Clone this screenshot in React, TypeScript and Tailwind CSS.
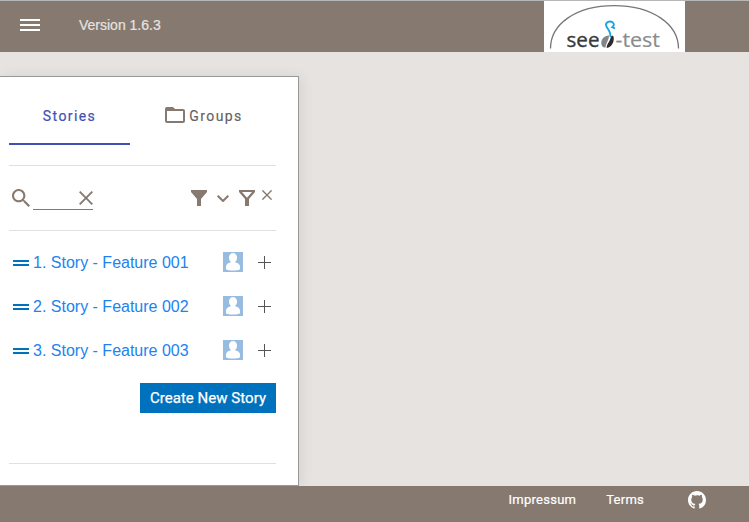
const stories = ['1. Story - Feature 001', '2. Story - Feature 002', '3. Story - Feature 003'];

function Logo() {
  return (
    <svg className="block h-[51px] w-[141px] bg-white" viewBox="0 0 141 51">
      <path d="M6.5 47.5C6.5 23 32 4.6 70 4.6S134.5 23 134.5 47.5" fill="none" stroke="#77777a" strokeWidth="1.3" />
      <text x="22.5" y="46" textLength="33" lengthAdjust="spacingAndGlyphs" fontSize="20" fill="#39393b" stroke="#39393b" strokeWidth="0.35" fontFamily="Open Sans, sans-serif">see</text>
      <text x="71.5" y="46" textLength="44.5" lengthAdjust="spacingAndGlyphs" fontSize="20" fill="#8b8b8d" stroke="#8b8b8d" strokeWidth="0.2" fontFamily="Open Sans, sans-serif">-test</text>
      <path d="M65 34.5C60 34.5 57 38.5 57.3 42.5C57.5 45.5 59.5 47 61.5 46.5C62 42 65 39 65 34.5z" fill="#858587" />
      <path d="M69.3 35C71 39.5 68 46.5 62.7 47C62.5 42.5 66.5 40.5 66.8 35.5C67.5 34.8 68.5 34.5 69.3 35z" fill="#2b2b2d" />
      <path d="M66.3 36C67.3 30 62.5 27.5 62 24.2C61.6 20.8 66 19.6 68.5 21.3C70.3 22.6 70.4 24.3 68.3 26.2L71 27.3" fill="none" stroke="#1aa7dc" strokeWidth="1.9" />
    </svg>
  );
}

function Avatar() {
  return (
    <svg className="h-5 w-5 shrink-0" viewBox="0 0 20 20">
      <rect width="20" height="20" fill="#98bce0" />
      <ellipse cx="10" cy="5.7" rx="4.1" ry="4.7" fill="#fff" />
      <path d="M7.6 9h4.8v1.4c3 .3 4.6 2 4.6 4.400v2.400C15.500 19 4.500 19 3 17.200v-2.400c0-2.400 1.600-4.100 4.600-4.400z" fill="#fff" />
    </svg>
  );
}

export default function App() {
  return (
    <div className="flex h-[522px] w-[749px] flex-col overflow-hidden bg-[#e6e3e0] font-[Roboto,sans-serif]">
      <header className="flex h-[52px] shrink-0 items-center border-t border-[#b7b7b7] bg-[#867970]">
        <svg className="mb-[3px] ml-5 h-3 w-5" viewBox="0 0 20 12" fill="#fff">
          <path d="M0 0h20v2H0zM0 5h20v2H0zM0 10h20v2H0z" />
        </svg>
        <span className="mb-[3px] ml-[39px] text-[14px] leading-5 text-[#e6e3e0] [-webkit-text-stroke:0.2px_#e6e3e0] font-['Liberation_Sans',sans-serif]">Version 1.6.3</span>
        <div className="mr-16 ml-auto"><Logo /></div>
      </header>

      <main className="flex h-[434px] shrink-0 pt-6">
        <aside className="flex h-[410px] w-[299px] flex-col border-y border-r border-[#989898] bg-white pr-[22px] pl-[9px] shadow-[3px_0_12px_rgba(0,0,0,0.07)]">
          <div className="flex h-[68px] shrink-0 text-[14px] tracking-[1.4px]">
            <div className="flex w-[121px] items-center justify-center border-b-2 border-[#3f51b5] pt-3 text-[#3f51b5] [-webkit-text-stroke:0.2px_#3f51b5]">Stories</div>
            <div className="flex flex-1 items-center justify-center pt-2.5 pl-0.5 text-[#666260] [-webkit-text-stroke:0.15px_#666260]">
              <svg className="mr-1 mb-0.5 h-4 w-5" viewBox="0 0 20 16">
                <path d="M2 0h6l2 2h8a2 2 0 0 1 2 2v10a2 2 0 0 1-2 2H2a2 2 0 0 1-2-2V2a2 2 0 0 1 2-2zm0 4v10h16V4z" fill="#867970" fillRule="evenodd" />
              </svg>
              Groups
            </div>
          </div>
          <div className="mt-5 h-px shrink-0 bg-[#e0e0e0]" />

          <div className="flex h-16 shrink-0 items-start text-[#867970]">
            <svg className="mt-[23px] ml-[3px] h-[18px] w-[18px]" viewBox="3 3 17.5 17.5" fill="currentColor">
              <path d="M15.5 14h-.79l-.28-.27A6.5 6.5 0 1 0 13.73 14.43l.27.28v.79l5 4.99L20.49 19zm-6 0a4.5 4.5 0 1 1 0-9 4.5 4.5 0 0 1 0 9z" />
            </svg>
            <div className="mt-5 ml-[3px] flex h-6 w-[60px] items-center justify-end border-b border-[#867970]">
              <svg className="h-3.5 w-3.5" viewBox="0 0 14 14" fill="none" stroke="currentColor" strokeWidth="1.9">
                <path d="M.7.7l12.6 12.6M13.3.7L.7 13.3" />
              </svg>
            </div>
            <svg className="mt-6 ml-[98px] h-4 w-4" viewBox="0 0 16 16" fill="currentColor">
              <path d="M0 0h16v2L10 9v7H6V9L0 2z" />
            </svg>
            <svg className="mt-[29px] ml-2.5 h-[7px] w-3" viewBox="0 0 12 7" fill="none" stroke="currentColor" strokeWidth="2">
              <path d="M.7.7L6 6l5.3-5.3" />
            </svg>
            <svg className="mt-6 ml-2.5 h-4 w-4" viewBox="0 0 16 16" fill="currentColor">
              <path fillRule="evenodd" d="M0 0h16v2L10 9v7H6V9L0 2zM3 2l5 5.8L13 2z" />
            </svg>
            <svg className="mt-6 ml-[7px] h-2.5 w-2.5" viewBox="0 0 10 10" fill="none" stroke="currentColor" strokeWidth="1.4">
              <path d="M.4.4l9.2 9.2M9.6.4L.4 9.6" />
            </svg>
          </div>
          <div className="h-px shrink-0 bg-[#e0e0e0]" />

          <ul className="mt-[9px] shrink-0">
            {stories.map((story) => (
              <li key={story} className="flex h-11 items-center">
                <svg className="mt-0.5 ml-1 h-1.5 w-4" viewBox="0 0 16 6" fill="#0071bc">
                  <path d="M0 0h16v2H0zM0 4h16v2H0z" />
                </svg>
                <span className="mt-0.5 ml-1 text-[16px] leading-6 text-[#2083f0] font-['Liberation_Sans',sans-serif]">{story}</span>
                <div className="ml-auto"><Avatar /></div>
                <svg className="mr-[5px] ml-[15px] h-[13px] w-[13px]" viewBox="0 0 13 13" fill="#555">
                  <path d="M6 0h1v13H6zM0 6h13v1H0z" />
                </svg>
              </li>
            ))}
          </ul>
          <button className="mt-[11px] h-[30px] w-[136px] shrink-0 self-end bg-[#0071bc] text-[15px] tracking-[0.03px] text-white [-webkit-text-stroke:0.25px_white]">Create New Story</button>
          <div className="mt-[50px] h-px shrink-0 bg-[#e0e0e0]" />
        </aside>
      </main>

      <footer className="flex h-9 shrink-0 items-start justify-end bg-[#867970] pr-[43px] text-[13px] leading-5 tracking-[0.25px] text-white [-webkit-text-stroke:0.2px_white]">
        <a className="mt-1">Impressum</a>
        <a className="mt-1 ml-[30px]">Terms</a>
        <svg className="mt-[5px] ml-11 h-[18px] w-[18px]" viewBox="0 0 16 16" fill="#fff">
          <path d="M8 0C3.58 0 0 3.58 0 8c0 3.54 2.29 6.53 5.47 7.59.4.07.55-.17.55-.38 0-.19-.01-.82-.01-1.49-2.01.37-2.53-.49-2.69-.94-.09-.23-.48-.94-.82-1.13-.28-.15-.68-.52-.01-.53.63-.01 1.08.58 1.23.82.72 1.21 1.87.87 2.33.66.07-.52.28-.87.51-1.07-1.78-.2-3.64-.89-3.64-3.95 0-.87.31-1.59.82-2.15-.08-.2-.36-1.02.08-2.12 0 0 .67-.21 2.2.82A7.6 7.6 0 0 1 8 3.86c.68 0 1.36.09 2 .27 1.53-1.04 2.2-.82 2.2-.82.44 1.1.16 1.92.08 2.12.51.56.82 1.27.82 2.15 0 3.07-1.87 3.75-3.65 3.95.29.25.54.73.54 1.48 0 1.07-.01 1.93-.01 2.2 0 .21.15.46.55.38A8 8 0 0 0 16 8c0-4.42-3.58-8-8-8z" />
        </svg>
      </footer>
    </div>
  );
}
